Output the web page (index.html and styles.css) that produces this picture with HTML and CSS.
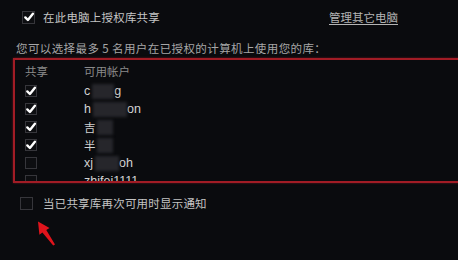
FILE: index.html
```html
<!DOCTYPE html>
<html lang="zh-CN">
<head>
<meta charset="utf-8">
<title>库共享</title>
<link rel="stylesheet" href="styles.css">
</head>
<body>
<div class="page">
  <div class="top-row">
    <span class="cb cb-lg checked"><svg viewBox="0 0 12 12"><path d="M2.3 6.4 L4.9 9 L9.9 2.8"/></svg></span>
    <span class="label">在此电脑上授权库共享</span>
    <span class="manage">管理其它电脑</span>
  </div>
  <div class="hint">您可以选择最多 5 名用户在已授权的计算机上使用您的库：</div>
  <div class="share-box">
    <div class="list-head">
      <span class="col-share">共享</span>
      <span class="col-name">可用帐户</span>
    </div>
    <div class="row">
      <span class="col-share"><span class="cb checked"><svg viewBox="0 0 12 12"><path d="M2.3 6.4 L4.9 9 L9.9 2.8"/></svg></span></span>
      <span class="col-name">c<span class="mask w22"></span>g</span>
    </div>
    <div class="row">
      <span class="col-share"><span class="cb checked"><svg viewBox="0 0 12 12"><path d="M2.3 6.4 L4.9 9 L9.9 2.8"/></svg></span></span>
      <span class="col-name">h<span class="mask w34"></span>on</span>
    </div>
    <div class="row">
      <span class="col-share"><span class="cb checked"><svg viewBox="0 0 12 12"><path d="M2.3 6.4 L4.9 9 L9.9 2.8"/></svg></span></span>
      <span class="col-name cjk">吉<span class="mask w16"></span></span>
    </div>
    <div class="row">
      <span class="col-share"><span class="cb checked"><svg viewBox="0 0 12 12"><path d="M2.3 6.4 L4.9 9 L9.9 2.8"/></svg></span></span>
      <span class="col-name cjk">半<span class="mask w16"></span></span>
    </div>
    <div class="row">
      <span class="col-share"><span class="cb"></span></span>
      <span class="col-name">xj<span class="mask w24"></span>oh</span>
    </div>
    <div class="row">
      <span class="col-share"><span class="cb"></span></span>
      <span class="col-name">zhifei1111</span>
    </div>
  </div>
  <div class="bottom-row">
    <span class="cb cb-lg"></span>
    <span class="label">当已共享库再次可用时显示通知</span>
  </div>
  <svg class="arrow" viewBox="0 0 30 35" width="30" height="35">
    <polygon points="8,5.5 19.5,12 16.3,14 25,28.6 23.2,29.6 12.4,16.6 9.4,18.8"/>
  </svg>
</div>
</body>
</html>
```
FILE: styles.css
```css
html, body {
  margin: 0;
  padding: 0;
}
body {
  width: 458px;
  height: 260px;
  overflow: hidden;
  background: #0a0b0e;
  color: #c4c4c4;
  font-family: "Noto Sans CJK SC", "Noto Sans", sans-serif;
  font-size: 11.5px;
}
.page {
  position: relative;
  width: 458px;
  height: 260px;
}
.top-row {
  display: flex;
  align-items: center;
  height: 22px;
  margin-top: 6px;
  padding-left: 22px;
}
.label {
  margin-left: 8px;
  line-height: 16px;
  letter-spacing: 0.2px;
}
.manage {
  margin-left: auto;
  margin-right: 60px;
  color: #b4b4b4;
  text-decoration: underline;
  text-underline-offset: 2px;
  line-height: 16px;
}
.hint {
  margin-top: 12px;
  padding-left: 16px;
  line-height: 16px;
  height: 16px;
  color: #a6a6a6;
  white-space: nowrap;
  letter-spacing: 0.4px;
}
.share-box {
  box-sizing: border-box;
  margin-top: 2px;
  margin-left: 13px;
  width: 500px;
  height: 125px;
  border: 2px solid #a11c25;
  box-shadow: 0 0 2px rgba(160, 28, 37, 0.6);
  overflow: hidden;
}
.list-head {
  display: flex;
  align-items: center;
  height: 22px;
  padding-left: 10px;
  color: #8a8a8a;
}
.row {
  display: flex;
  align-items: center;
  height: 18px;
  padding-left: 10px;
}
.col-share {
  width: 59px;
  display: flex;
  align-items: center;
}
.col-name {
  display: flex;
  align-items: center;
  font-family: "Liberation Sans", "Noto Sans CJK SC", sans-serif;
  font-size: 12.5px;
  color: #d2d2d2;
  line-height: 16px;
}
.list-head .col-name {
  font-family: "Noto Sans CJK SC", sans-serif;
  font-size: 11.5px;
  color: #8a8a8a;
}
.col-name.cjk {
  font-family: "Noto Sans CJK SC", sans-serif;
  font-size: 11.5px;
}
.mask {
  display: inline-block;
  height: 15px;
  background: #26262b;
  filter: blur(1.5px);
}
.w16 { width: 16px; margin-left: 1px; }
.w22 { width: 22px; margin-left: 2px; }
.w24 { width: 24px; margin-left: 2px; }
.w34 { width: 34px; margin-left: 2px; }
.cb {
  box-sizing: border-box;
  display: inline-flex;
  align-items: center;
  justify-content: center;
  width: 12px;
  height: 12px;
  border: 1px solid #36363b;
  background: #0d0e11;
}
.cb-lg {
  width: 13px;
  height: 13px;
}
.cb svg {
  width: 12px;
  height: 12px;
  flex: none;
}
.cb svg path {
  fill: none;
  stroke: #ffffff;
  stroke-width: 2.4;
  stroke-linecap: round;
  stroke-linejoin: round;
}
.bottom-row {
  display: flex;
  align-items: center;
  height: 20px;
  margin-top: 10px;
  padding-left: 20px;
}
.bottom-row .label {
  margin-left: 10px;
}
.arrow {
  position: absolute;
  left: 30px;
  top: 210px;
}
.arrow polygon {
  fill: #e0141c;
}
```
